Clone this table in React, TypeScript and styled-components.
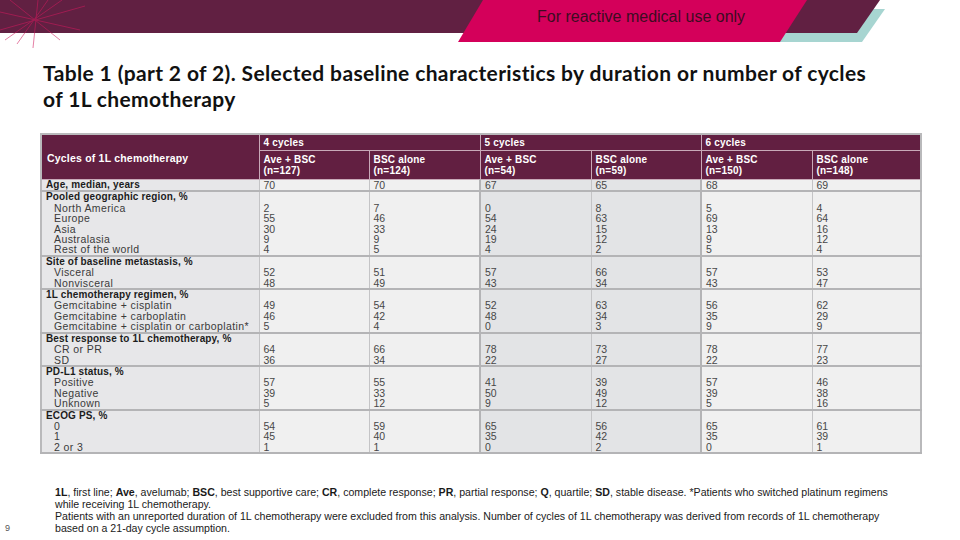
import React, { FunctionComponent } from 'react';
import styled, { createGlobalStyle } from 'styled-components';

type Group = {
  title: string;
  items: string[];
  values: number[][];
};

const groups: Group[] = [
  { title: 'Age, median, years', items: [], values: [[70], [70], [67], [65], [68], [69]] },
  {
    title: 'Pooled geographic region, %',
    items: ['North America', 'Europe', 'Asia', 'Australasia', 'Rest of the world'],
    values: [
      [2, 55, 30, 9, 4],
      [7, 46, 33, 9, 5],
      [0, 54, 24, 19, 4],
      [8, 63, 15, 12, 2],
      [5, 69, 13, 9, 5],
      [4, 64, 16, 12, 4],
    ],
  },
  {
    title: 'Site of baseline metastasis, %',
    items: ['Visceral', 'Nonvisceral'],
    values: [
      [52, 48],
      [51, 49],
      [57, 43],
      [66, 34],
      [57, 43],
      [53, 47],
    ],
  },
  {
    title: '1L chemotherapy regimen, %',
    items: ['Gemcitabine + cisplatin', 'Gemcitabine + carboplatin', 'Gemcitabine + cisplatin or carboplatin*'],
    values: [
      [49, 46, 5],
      [54, 42, 4],
      [52, 48, 0],
      [63, 34, 3],
      [56, 35, 9],
      [62, 29, 9],
    ],
  },
  {
    title: 'Best response to 1L chemotherapy, %',
    items: ['CR or PR', 'SD'],
    values: [
      [64, 36],
      [66, 34],
      [78, 22],
      [73, 27],
      [78, 22],
      [77, 23],
    ],
  },
  {
    title: 'PD-L1 status, %',
    items: ['Positive', 'Negative', 'Unknown'],
    values: [
      [57, 39, 5],
      [55, 33, 12],
      [41, 50, 9],
      [39, 49, 12],
      [57, 39, 5],
      [46, 38, 16],
    ],
  },
  {
    title: 'ECOG PS, %',
    items: ['0', '1', '2 or 3'],
    values: [
      [54, 45, 1],
      [59, 40, 1],
      [65, 35, 0],
      [56, 42, 2],
      [65, 35, 0],
      [61, 39, 1],
    ],
  },
];

const arms = [
  { cycles: '4 cycles', ave: 127, bsc: 124 },
  { cycles: '5 cycles', ave: 54, bsc: 59 },
  { cycles: '6 cycles', ave: 150, bsc: 148 },
];

const Banner: FunctionComponent = () => (
  <BannerBar>
    <BannerArt viewBox="0 0 960 48" width="960" height="48">
      <polygon points="790,9 885,9 862,42 770,42" fill="#a7d5d1" />
      <polygon points="0,0 880,0 857,33 0,33" fill="#612042" />
      <polygon points="483,0 807,0 780,42 458,42" fill="#d4005a" />
      <g stroke="#d11a5e" strokeWidth="1" opacity="0.55">
        <line x1="0" y1="12" x2="80" y2="30" />
        <line x1="5" y1="40" x2="62" y2="0" />
        <line x1="17" y1="44" x2="48" y2="0" />
        <line x1="33" y1="48" x2="38" y2="0" />
        <line x1="0" y1="30" x2="85" y2="6" />
        <line x1="10" y1="0" x2="60" y2="40" />
      </g>
    </BannerArt>
    <BannerText>For reactive medical use only</BannerText>
  </BannerBar>
);

const App: FunctionComponent = () => (
  <Page>
    <GlobalStyle />
    <Banner />
    <Title>
      Table 1 (part 2 of 2). Selected baseline characteristics by duration or number of cycles
      <br />
      of 1L chemotherapy
    </Title>
    <Table>
      <colgroup>
        <col style={{ width: 218 }} />
        <col style={{ width: 110 }} />
        <col style={{ width: 111 }} />
        <col style={{ width: 111 }} />
        <col style={{ width: 110 }} />
        <col style={{ width: 111 }} />
        <col style={{ width: 109 }} />
      </colgroup>
      <thead>
        <tr>
          <HeadCell rowSpan={2} $first>
            Cycles of 1L chemotherapy
          </HeadCell>
          {arms.map((arm) => (
            <HeadCell key={arm.cycles} colSpan={2} $top>
              {arm.cycles}
            </HeadCell>
          ))}
        </tr>
        <tr>
          {arms.map((arm) => (
            <React.Fragment key={arm.cycles}>
              <HeadCell>
                Ave + BSC
                <br />
                (n={arm.ave})
              </HeadCell>
              <HeadCell>
                BSC alone
                <br />
                (n={arm.bsc})
              </HeadCell>
            </React.Fragment>
          ))}
        </tr>
      </thead>
      <tbody>
        {groups.map((group) => (
          <tr key={group.title}>
            <LabelCell>
              <GroupTitle>{group.title}</GroupTitle>
              {group.items.map((item) => (
                <SubItem key={item}>{item}</SubItem>
              ))}
            </LabelCell>
            {group.values.map((column, i) => (
              <ValueCell key={i} $shade={i === 2 || i === 3} $split={i === 2 || i === 4}>
                {group.items.length > 0 && <Line>&nbsp;</Line>}
                {column.map((value, j) => (
                  <Line key={j}>{value}</Line>
                ))}
              </ValueCell>
            ))}
          </tr>
        ))}
      </tbody>
    </Table>
    <Footer>
      <PageNumber>9</PageNumber>
      <Footnote>
        <b>1L</b>, first line; <b>Ave</b>, avelumab; <b>BSC</b>, best supportive care; <b>CR</b>, complete
        response; <b>PR</b>, partial response; <b>Q</b>, quartile; <b>SD</b>, stable disease. *Patients who
        switched platinum regimens
        <br />
        while receiving 1L chemotherapy.
        <br />
        Patients with an unreported duration of 1L chemotherapy were excluded from this analysis. Number of
        cycles of 1L chemotherapy was derived from records of 1L chemotherapy
        <br />
        based on a 21-day cycle assumption.
      </Footnote>
    </Footer>
  </Page>
);

const GlobalStyle = createGlobalStyle`
  html, body {
    margin: 0;
    padding: 0;
    background: #ffffff;
  }
`;

const Page = styled.div`
  width: 960px;
  height: 540px;
  overflow: hidden;
  display: flex;
  flex-direction: column;
  font-family: 'Liberation Sans', Arial, sans-serif;
`;

const BannerBar = styled.header`
  position: relative;
  height: 48px;
  flex-shrink: 0;
`;

const BannerArt = styled.svg`
  display: block;
`;

const BannerText = styled.span`
  position: absolute;
  left: 537px;
  top: 7px;
  font-size: 16px;
  line-height: 20px;
  color: #3d0c22;
  letter-spacing: 0;
`;

const Title = styled.h1`
  margin: 12px 0 0 43px;
  font-family: Lato, 'Liberation Sans', sans-serif;
  font-weight: 700;
  font-size: 21px;
  letter-spacing: 0.37px;
  line-height: 26px;
  color: #111111;
`;

const Table = styled.table`
  margin: 21px 0 0 40px;
  width: 880px;
  table-layout: fixed;
  border-collapse: collapse;
  border: 2px solid #b9b9bb;
  font-size: 10px;
`;

const HeadCell = styled.th<{ $first?: boolean; $top?: boolean }>`
  background: #621f41;
  color: #ffffff;
  font-weight: 700;
  text-align: left;
  vertical-align: ${(p) => (p.$first ? 'middle' : 'top')};
  padding: ${(p) => (p.$top ? '2px 4px 1px' : '3px 4px 3px')};
  line-height: ${(p) => (p.$top ? '12px' : '11px')};
  font-size: ${(p) => (p.$first ? '10.5px' : '10px')};
  letter-spacing: 0.2px;
  border: 1px solid #c8a9b8;
  border-top: none;
  ${(p) => (p.$first ? 'padding-left: 5px; padding-top: 6px;' : '')}
`;

const LabelCell = styled.td`
  background: #e7e7e9;
  vertical-align: top;
  padding: 0 4px;
  border: 1px solid #c4c4c6;
  border-bottom: 2px solid #b4b4b6;
`;

const GroupTitle = styled.div`
  font-weight: 700;
  line-height: 10.4px;
  color: #1c1c1c;
  letter-spacing: 0.15px;
`;

const SubItem = styled.div`
  padding-left: 8px;
  font-size: 10.5px;
  letter-spacing: 0.4px;
  line-height: 10.4px;
  color: #3a3a3a;
  white-space: nowrap;
`;

const ValueCell = styled.td<{ $shade: boolean; $split: boolean }>`
  background: ${(p) => (p.$shade ? '#e3e4e6' : '#f0f0f0')};
  vertical-align: top;
  padding: 0 4px;
  font-size: 10.5px;
  color: #474747;
  border: 1px solid #c4c4c6;
  border-bottom: 2px solid #b4b4b6;
  ${(p) => (p.$split ? 'border-left: 2px solid #b4b4b6;' : '')}
`;

const Line = styled.div`
  line-height: 10.4px;
`;

const Footer = styled.footer`
  margin-top: 32px;
  display: flex;
  align-items: flex-end;
`;

const PageNumber = styled.span`
  width: 50px;
  padding-left: 5px;
  font-size: 9px;
  color: #555555;
  line-height: 12px;
`;

const Footnote = styled.p`
  margin: 0;
  font-size: 10.6px;
  line-height: 12px;
  color: #1a1a1a;
  white-space: nowrap;
`;

export default App;
